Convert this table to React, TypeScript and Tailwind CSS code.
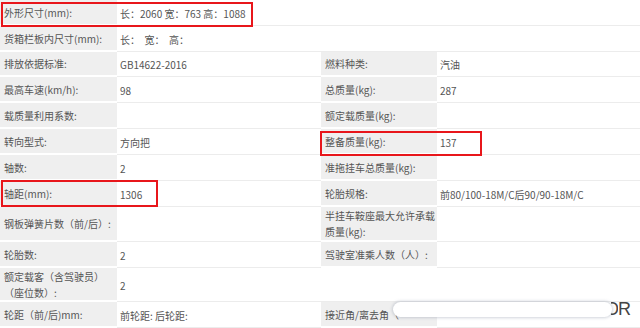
import clsx from "clsx";

type Cell = { label?: string; value?: string };

const ROW_HEIGHTS = [26, 26, 25, 26, 26, 26, 26, 26, 35, 26, 34, 26];

const LEFT: Cell[] = [
  { label: "外形尺寸(mm):", value: "长：2060 宽：763 高：1088" },
  { label: "货箱栏板内尺寸(mm):", value: "长：  宽：  高：" },
  { label: "排放依据标准:", value: "GB14622-2016" },
  { label: "最高车速(km/h):", value: "98" },
  { label: "载质量利用系数:" },
  { label: "转向型式:", value: "方向把" },
  { label: "轴数:", value: "2" },
  { label: "轴距(mm):", value: "1306" },
  { label: "钢板弹簧片数（前/后）:" },
  { label: "轮胎数:", value: "2" },
  { label: "额定载客（含驾驶员）\n（座位数）:", value: "2" },
  { label: "轮距（前/后)mm:", value: "前轮距: 后轮距:" },
];

const RIGHT: Cell[] = [
  {},
  {},
  { label: "燃料种类:", value: "汽油" },
  { label: "总质量(kg):", value: "287" },
  { label: "额定载质量(kg):" },
  { label: "整备质量(kg):", value: "137" },
  { label: "准拖挂车总质量(kg):" },
  { label: "轮胎规格:", value: "前80/100-18M/C后90/90-18M/C" },
  { label: "半挂车鞍座最大允许承载\n质量(kg):" },
  { label: "驾驶室准乘人数（人）:" },
  {},
  { label: "接近角/离去角（" },
];

function Table({ rows, labelWidth, width }: { rows: Cell[]; labelWidth: number; width: number }) {
  return (
    <div className="flex flex-col" style={{ width }}>
      {rows.map((row, i) => (
        <div key={i} className="flex" style={{ height: ROW_HEIGHTS[i] }}>
          <div
            className={clsx(
              "flex items-center whitespace-pre pl-[4px] pt-[1px] leading-[16px]",
              row.label ? "border-b-2 border-white bg-[#efefef]" : "border-b border-[#ececec] bg-white"
            )}
            style={{ width: labelWidth }}
          >
            {row.label}
          </div>
          <div className="flex flex-1 items-center border-b border-[#ececec] bg-white pl-[3px] pt-[1px]">
            <span className="whitespace-pre">{row.value}</span>
          </div>
        </div>
      ))}
    </div>
  );
}

export default function App() {
  return (
    <div
      className="relative h-[328px] w-[640px] overflow-hidden bg-white text-[10px] text-[#555]"
      style={{ fontFamily: '"Noto Sans CJK SC", "Noto Sans", sans-serif' }}
    >
      <div className="flex">
        <Table rows={LEFT} labelWidth={117} width={321} />
        <Table rows={RIGHT} labelWidth={116} width={319} />
      </div>

      {/* highlight boxes */}
      <div className="absolute left-[1px] top-[2px] h-[25px] w-[252px] border-2 border-[#e8161b]" />
      <div className="absolute left-[1px] top-[180px] h-[27px] w-[157px] border-2 border-[#e8161b]" />
      <div className="absolute left-[320px] top-[131px] h-[25px] w-[162px] border-2 border-[#e8161b]" />

      {/* watermark */}
      <div className="absolute left-[393px] top-[302px] h-[15px] w-[219px] rounded-full bg-white shadow-[0_0_3px_1px_rgba(150,160,175,0.45)]" />
      <div className="absolute left-[611px] top-[298px] flex text-[18px] leading-[22px] text-[#444]" style={{ fontFamily: '"Liberation Sans", sans-serif' }}>
        <span className="block w-[7px] overflow-hidden">
          <span className="block -translate-x-[6px]">O</span>
        </span>
        <span>R</span>
      </div>
    </div>
  );
}
